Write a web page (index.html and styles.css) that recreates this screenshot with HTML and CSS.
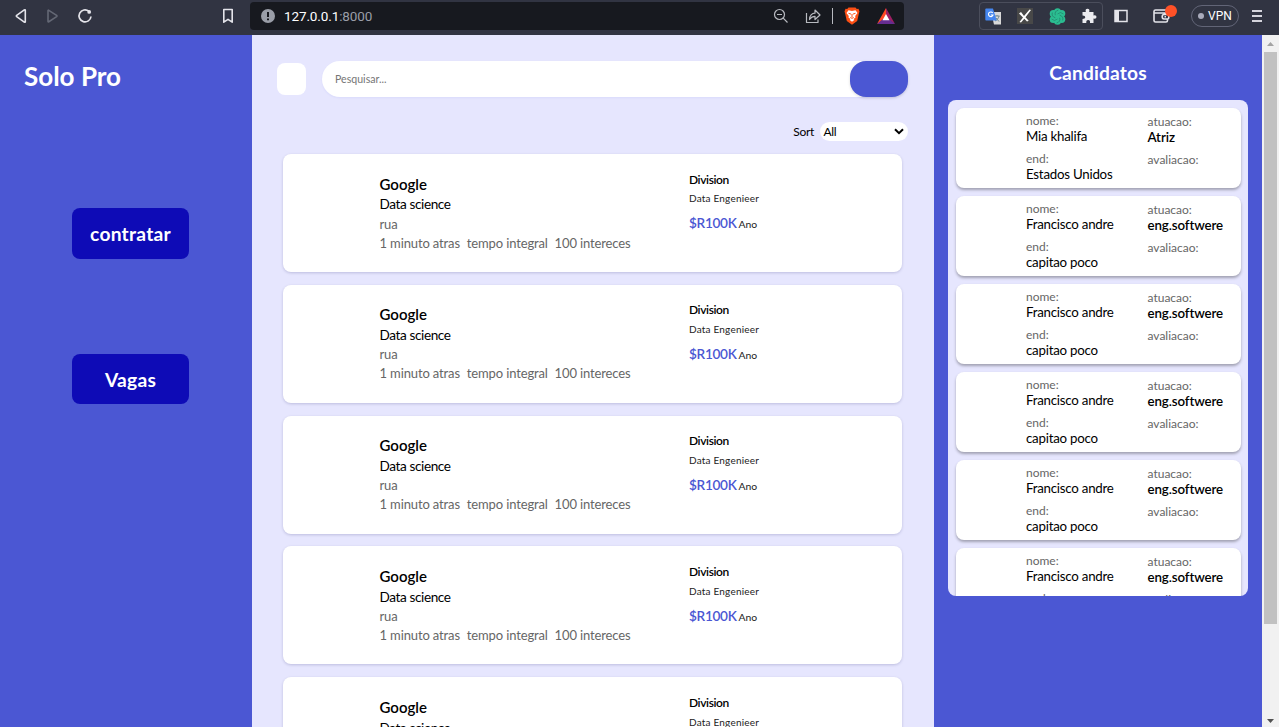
FILE: index.html
```html
<!DOCTYPE html>
<html lang="pt">
<head>
<meta charset="utf-8">
<title>Solo Pro</title>
<link rel="stylesheet" href="styles.css">
</head>
<body>
<header class="browser">
  <div class="nav">
    <svg width="15" height="16" viewBox="0 0 15 16" class="ic"><path d="M10 2.3v11.4q0 1-1 .4L1.400 8.600q-.7-.6 0-1.200L9 1.900q1-.6 1 .4z" transform="translate(.3 0)"/></svg>
    <svg width="15" height="16" viewBox="0 0 15 16" class="ic dim"><path d="M2 2.600v10.800q0 .8.8.3L10.600 8.600q.7-.6 0-1.200L2.800 2.300Q2 1.800 2 2.600z"/></svg>
    <svg width="16" height="16" viewBox="0 0 16 16" class="ic"><path d="M11.800 3.200A6 6 0 1 0 14 8.500" stroke-width="1.700"/><circle cx="12.200" cy="3.900" r="1.900" class="fill"/></svg>
  </div>
  <svg width="12" height="16" viewBox="0 0 12 16" class="ic mark"><path d="M1.800 1.500h8.400v12.700L6 11.400l-4.200 2.800z"/></svg>
  <div class="address">
    <svg width="14" height="14" viewBox="0 0 14 14"><circle cx="7" cy="7" r="7" fill="#9a9ea8"/><path d="M7 3v5M7 9.500v1.800" stroke="#17191f" stroke-width="2"/></svg>
    <span class="url">127.0.0.1<span class="port">:8000</span></span>
    <svg width="16" height="16" viewBox="0 0 16 16" class="ic thin zoomout"><circle cx="6.500" cy="6.500" r="5"/><path d="M4 6.500h5M10.200 10.200l4.300 4.300"/></svg>
    <svg width="17" height="16" viewBox="0 0 17 16" class="ic thin share"><path d="M1.500 5v9.500h11.500v-3M4.500 11.500C4.500 7.500 7 5.200 10 5.200V2l5 5-5 4.500V8.300C7.500 8.300 6 9.200 4.500 11.500z"/></svg>
    <i class="sep"></i>
    <svg width="16" height="18" viewBox="0 0 16 18" class="lion"><path d="M4.500.5h7l1.300 1.500 1.700-.2 1 2.700-.5 1.500-1.800 8L8 17.700 2.800 14 1 6 .5 4.500l1-2.700 1.700.2z" fill="#fb4f14"/><path d="M4.500 3.200 8 4l3.500-.8 2 2.800-2.300 3 .3 1.400L9.600 12l.7 1L8 14.700 5.700 13l.7-1-1.900-1.600L4.800 9 2.500 6z" fill="#fff"/><path d="M4.500 6.300l2.600.8M11.500 6.300l-2.600.8M8 7v3M6.300 10.500 8 11.300l1.700-.8" stroke="#fb4f14" fill="none"/></svg>
    <svg width="18" height="16" viewBox="0 0 18 16"><path d="M9 0 0 16l9-6z" fill="#ff4724"/><path d="M9 0l9 16-9-6z" fill="#9e1f63"/><path d="M0 16h18l-6-5H6z" fill="#662d91"/><path d="M9 6l3.500 6.200h-7z" fill="#fff"/></svg>
  </div>
  <div class="extensions">
    <svg width="17" height="17" viewBox="0 0 17 17"><path d="M6 4h10v12.500H9z" fill="#d8d8d8"/><path d="M9.500 8h5M12 7v1M14 8c-.5 2.500-2 4-4 5M11 10l3 3.500" stroke="#6f8791" fill="none"/><path d="M1.200.5H8l3.700 12H1.200Q.3 12.500.3 11.500v-10q0-1 .9-1z" fill="#4586ef"/><path d="M7.700 5A2.300 2.300 0 1 0 8 7H5.800" stroke="#fff" fill="none" stroke-width="1.100"/></svg>
    <svg width="16" height="16" viewBox="0 0 16 16"><path fill="#484848" d="M0 0h16v16H0z"/><path d="M2 5.500 4 4l3 4 5.500-6.500L14 2 8.500 9.300l3.200 3.500-1.700.7-2.700-2.800L4 14.500 2.500 14 6 9.500z" fill="#fff"/></svg>
    <svg width="17" height="17" viewBox="-8.500 -8.500 17 17"><g fill="#2bbd91"><circle r="6"/><circle cx="4.200" cy="-3" r="3.600"/><circle cx="-4.200" cy="3" r="3.600"/><circle cy="-4.800" r="3.500"/><circle cy="4.800" r="3.500"/><circle cx="-4.200" cy="-2.800" r="3.600"/><circle cx="4.200" cy="2.800" r="3.600"/></g><g fill="none" stroke="#1f7a66" stroke-width=".6"><path id="p" d="M0-2.500Q3-5.500 6-2.500"/><use href="#p" transform="rotate(60)"/><use href="#p" transform="rotate(120)"/><use href="#p" transform="rotate(180)"/><use href="#p" transform="rotate(240)"/><use href="#p" transform="rotate(300)"/></g></svg>
    <svg width="16" height="16" viewBox="0 0 16 16"><path d="M1.500 4h3.300q-.8-3.200 1.700-3.200T8.200 4h4.300v3.500q3-.8 3 1.500t-3 1.600V15H9q.5-3-1.800-3T5.300 15H1.500v-4q2.800 0 2.800-1.800T1.500 7.500z" fill="#ececf0"/></svg>
  </div>
  <svg width="14" height="14" viewBox="0 0 14 14" class="panel"><path d="M1 1.500h12v11H1z" fill="none" stroke="#e4e4ea" stroke-width="1.500"/><path d="M1 1h4v12H1z" fill="#e4e4ea"/></svg>
  <div class="wallet">
    <svg width="17" height="14" viewBox="0 0 17 14" class="ic"><path d="M14.500 4V2.500q0-1.500-1.500-1.500H2.500Q1 1 1 2.500v9Q1 13 2.500 13H13q1.500 0 1.500-1.500V10M1.500 4h13M15.500 5.500H11q-1.800 0-1.800 2.200T11 10h3.500q1.300 0 1.300-2zM11.500 7.700h1.500"/></svg>
    <i class="badge"></i>
  </div>
  <div class="vpn"><i></i>VPN</div>
  <div class="menu"><i></i><i></i><i></i></div>
</header>
<div class="page">
  <aside class="side">
    <h1>Solo Pro</h1>
    <a class="btn">contratar</a>
    <a class="btn">Vagas</a>
  </aside>
  <main class="main">
    <div class="search"><span class="square"></span><div class="field"><span>Pesquisar...</span><b></b></div></div>
    <div class="sort"><span>Sort</span><div class="select">All<svg width="10" height="7" viewBox="0 0 10 7"><path d="M1 1.200l4 4 4-4" fill="none" stroke="#000" stroke-width="2"/></svg></div></div>
    <section class="jobs">
      <article class="job"><div class="info"><h2>Google</h2><h3>Data science</h3><p>rua</p><p><span>1 minuto atras</span><span>tempo integral</span><span>100 intereces</span></p></div><div class="pay"><h4>Division</h4><p>Data Engenieer</p><div><b>$R100K</b><span>Ano</span></div></div></article>
      <article class="job"><div class="info"><h2>Google</h2><h3>Data science</h3><p>rua</p><p><span>1 minuto atras</span><span>tempo integral</span><span>100 intereces</span></p></div><div class="pay"><h4>Division</h4><p>Data Engenieer</p><div><b>$R100K</b><span>Ano</span></div></div></article>
      <article class="job"><div class="info"><h2>Google</h2><h3>Data science</h3><p>rua</p><p><span>1 minuto atras</span><span>tempo integral</span><span>100 intereces</span></p></div><div class="pay"><h4>Division</h4><p>Data Engenieer</p><div><b>$R100K</b><span>Ano</span></div></div></article>
      <article class="job"><div class="info"><h2>Google</h2><h3>Data science</h3><p>rua</p><p><span>1 minuto atras</span><span>tempo integral</span><span>100 intereces</span></p></div><div class="pay"><h4>Division</h4><p>Data Engenieer</p><div><b>$R100K</b><span>Ano</span></div></div></article>
      <article class="job"><div class="info"><h2>Google</h2><h3>Data science</h3><p>rua</p><p><span>1 minuto atras</span><span>tempo integral</span><span>100 intereces</span></p></div><div class="pay"><h4>Division</h4><p>Data Engenieer</p><div><b>$R100K</b><span>Ano</span></div></div></article>
    </section>
  </main>
  <aside class="right">
    <h2>Candidatos</h2>
    <div class="list">
      <div class="cand"><dl><dt>nome:</dt><dd>Mia khalifa</dd><dt>end:</dt><dd>Estados Unidos</dd></dl><dl class="role"><dt>atuacao:</dt><dd>Atriz</dd><dt>avaliacao:</dt></dl></div>
      <div class="cand"><dl><dt>nome:</dt><dd>Francisco andre</dd><dt>end:</dt><dd>capitao poco</dd></dl><dl class="role"><dt>atuacao:</dt><dd>eng.softwere</dd><dt>avaliacao:</dt></dl></div>
      <div class="cand"><dl><dt>nome:</dt><dd>Francisco andre</dd><dt>end:</dt><dd>capitao poco</dd></dl><dl class="role"><dt>atuacao:</dt><dd>eng.softwere</dd><dt>avaliacao:</dt></dl></div>
      <div class="cand"><dl><dt>nome:</dt><dd>Francisco andre</dd><dt>end:</dt><dd>capitao poco</dd></dl><dl class="role"><dt>atuacao:</dt><dd>eng.softwere</dd><dt>avaliacao:</dt></dl></div>
      <div class="cand"><dl><dt>nome:</dt><dd>Francisco andre</dd><dt>end:</dt><dd>capitao poco</dd></dl><dl class="role"><dt>atuacao:</dt><dd>eng.softwere</dd><dt>avaliacao:</dt></dl></div>
      <div class="cand"><dl><dt>nome:</dt><dd>Francisco andre</dd><dt>end:</dt><dd>capitao poco</dd></dl><dl class="role"><dt>atuacao:</dt><dd>eng.softwere</dd><dt>avaliacao:</dt></dl></div>
    </div>
  </aside>
  <div class="scroll">
    <svg width="7" height="4" viewBox="0 0 7 4"><path d="M0 4l3.500-4L7 4z" fill="#a3a3a3"/></svg>
    <i></i>
    <svg width="7" height="4" viewBox="0 0 7 4" class="down"><path d="M0 0l3.500 4L7 0z" fill="#505050"/></svg>
  </div>
</div>
</body>
</html>
```
FILE: styles.css
```css
* { box-sizing: border-box; margin: 0; padding: 0; }
body { width: 1279px; height: 727px; overflow: hidden; display: flex; flex-direction: column; font-family: Lato, sans-serif; color: #000; }
svg { display: block; flex: none; }

.browser { height: 35px; flex: none; background: #313442; display: flex; align-items: center; padding-bottom: 3px; }
.ic { fill: none; stroke: #e4e4ea; stroke-width: 1.6; stroke-linejoin: round; }
.ic .fill { fill: #e4e4ea; stroke: none; }
.ic.dim { stroke: #646875; }
.ic.thin { stroke: #b8bac0; stroke-width: 1.2; }
.nav { display: flex; gap: 16px; margin-left: 15px; width: 207px; }
.mark { margin-right: 16px; }
.address { width: 654px; height: 28px; border-radius: 4px; background: #17191f; display: flex; align-items: center; padding-left: 11px; }
.url { font: 13.5px/20px Roboto, sans-serif; color: #fff; margin-left: 9px; flex: 1; letter-spacing: -.12px; }
.port { color: #9a9ea8; }
.zoomout { margin-right: 16px; }
.share { margin-right: 10px; }
.sep { width: 1px; height: 16px; background: #b8bac0; }
.lion { margin: 0 17px 0 11px; }
.address svg:last-child { margin-right: 9px; }
.extensions { margin-left: 75px; width: 124px; height: 28px; border: 1px solid #4b4e5c; border-radius: 4px; display: flex; align-items: center; justify-content: space-between; padding: 0 5px 0 5px; }
.panel { margin-left: 11px; }
.wallet { position: relative; margin-left: 25px; width: 24px; height: 14px; }
.badge { position: absolute; left: 12px; top: -4px; width: 12px; height: 12px; border-radius: 50%; background: #ff5127; }
.vpn { margin-left: 14px; width: 48px; height: 22px; border: 1px solid #626577; border-radius: 11px; display: flex; align-items: center; padding-left: 6px; font: 12px Roboto, sans-serif; color: #fff; }
.vpn i { width: 6px; height: 6px; border-radius: 50%; background: #a9abbb; margin-right: 4px; }
.menu { margin-left: 13px; width: 10px; display: grid; gap: 3px; }
.menu i { height: 2px; background: #d4d4dc; }

.page { flex: 1; min-height: 0; display: flex; }
.side { width: 252px; background: #4b57d3; color: #fff; display: flex; flex-direction: column; align-items: flex-start; padding: 23px 0 0 24px; }
.side h1 { font-size: 26px; line-height: 36px; }
.btn { width: 117px; height: 51px; margin-left: 48px; border-radius: 8px; background: #0e0bb6; font-size: 19.2px; font-weight: 700; line-height: 51px; text-align: center; letter-spacing: .25px; }
.side h1 + .btn { margin-top: 114px; }
.btn + .btn { margin-top: 95px; height: 50px; }

.main { width: 682px; background: #e6e6fe; overflow: hidden; }
.search { display: flex; align-items: center; gap: 16px; height: 36px; margin: 26px 26px 0 25px; }
.square { width: 29px; height: 32px; border-radius: 8px; background: #fff; }
.field { flex: 1; height: 36px; border-radius: 18px; background: #fff; display: flex; align-items: center; justify-content: space-between; padding-left: 13px; font-size: 10.6px; color: #757575; box-shadow: 0 1px 2px rgba(75,87,211,.08); }
.field b { width: 58px; height: 36px; border-radius: 16px; background: #4b57d3; box-shadow: 0 1px 3px rgba(0,0,0,.15); }
.sort { display: flex; justify-content: flex-end; align-items: center; gap: 6px; margin: 25px 26px 0 0; height: 19px; font-size: 12px; letter-spacing: -.3px; }
.select { width: 88px; height: 19px; border-radius: 10px; background: #fff; display: flex; align-items: center; justify-content: space-between; padding: 0 4px 0 3.5px; }
.jobs { margin: 13px 32px 0 31px; display: grid; gap: 12.8px; }
.job { height: 118px; border-radius: 8px; background: #fff; box-shadow: 0 1px 3px rgba(0,0,80,.18); display: flex; padding-left: 96.5px; }
.info { width: 309.500px; padding-top: 19.600px; white-space: nowrap; }
.job h2 { font-size: 15px; font-weight: 600; line-height: 20px; margin-bottom: .8px; }
.job h3 { font-size: 13.600px; font-weight: 400; line-height: 21px; margin-bottom: -.8px; letter-spacing: -.4px; }
.info p { font-size: 13px; line-height: 19px; color: #666; letter-spacing: -.13px; }
.info p span { margin-right: 6.800px; }
.pay { padding-top: 16.600px; }
.job h4 { font-size: 12px; font-weight: 600; line-height: 17px; margin-bottom: .8px; letter-spacing: -.4px; }
.pay p { font-size: 10px; line-height: 20px; color: #222; letter-spacing: .2px; margin-bottom: 2px; }
.pay div { line-height: 27px; display: flex; align-items: baseline; gap: 2px; }
.pay b { font-size: 13.600px; font-weight: 600; color: #4b57d3; letter-spacing: -.3px; }
.pay div span { font-size: 10.400px; color: #222; }

.right { width: 328px; background: #4b57d3; padding: 24px 14px 0; }
.right h2 { color: #fff; font-size: 19.200px; line-height: 28px; text-align: center; letter-spacing: .15px; }
.list { margin-top: 13px; height: 496px; border-radius: 8px; background: #e6e6fe; padding: 8px 7px 0 8px; overflow: hidden; }
.cand { height: 80px; margin-bottom: 8px; border-radius: 8px; background: #fff; box-shadow: 0 2px 3px rgba(0,0,0,.3); padding: 5px 0 0 70px; display: flex; }
.cand dl { width: 121.500px; white-space: nowrap; }
.cand dt { font-size: 12px; line-height: 15px; color: #666; }
.cand dd { font-size: 13.300px; line-height: 16px; margin-bottom: 7px; letter-spacing: -.24px; }
.cand .role { padding-top: 1px; width: auto; }
.cand .role dd { font-weight: 600; letter-spacing: -.1px; }

.scroll { width: 17px; background: #f1f1f1; display: flex; flex-direction: column; align-items: center; padding: 7px 0 4px; }
.scroll i { width: 13px; height: 572px; background: #c1c1c1; margin-top: 6px; }
.scroll .down { margin-top: auto; }
```
